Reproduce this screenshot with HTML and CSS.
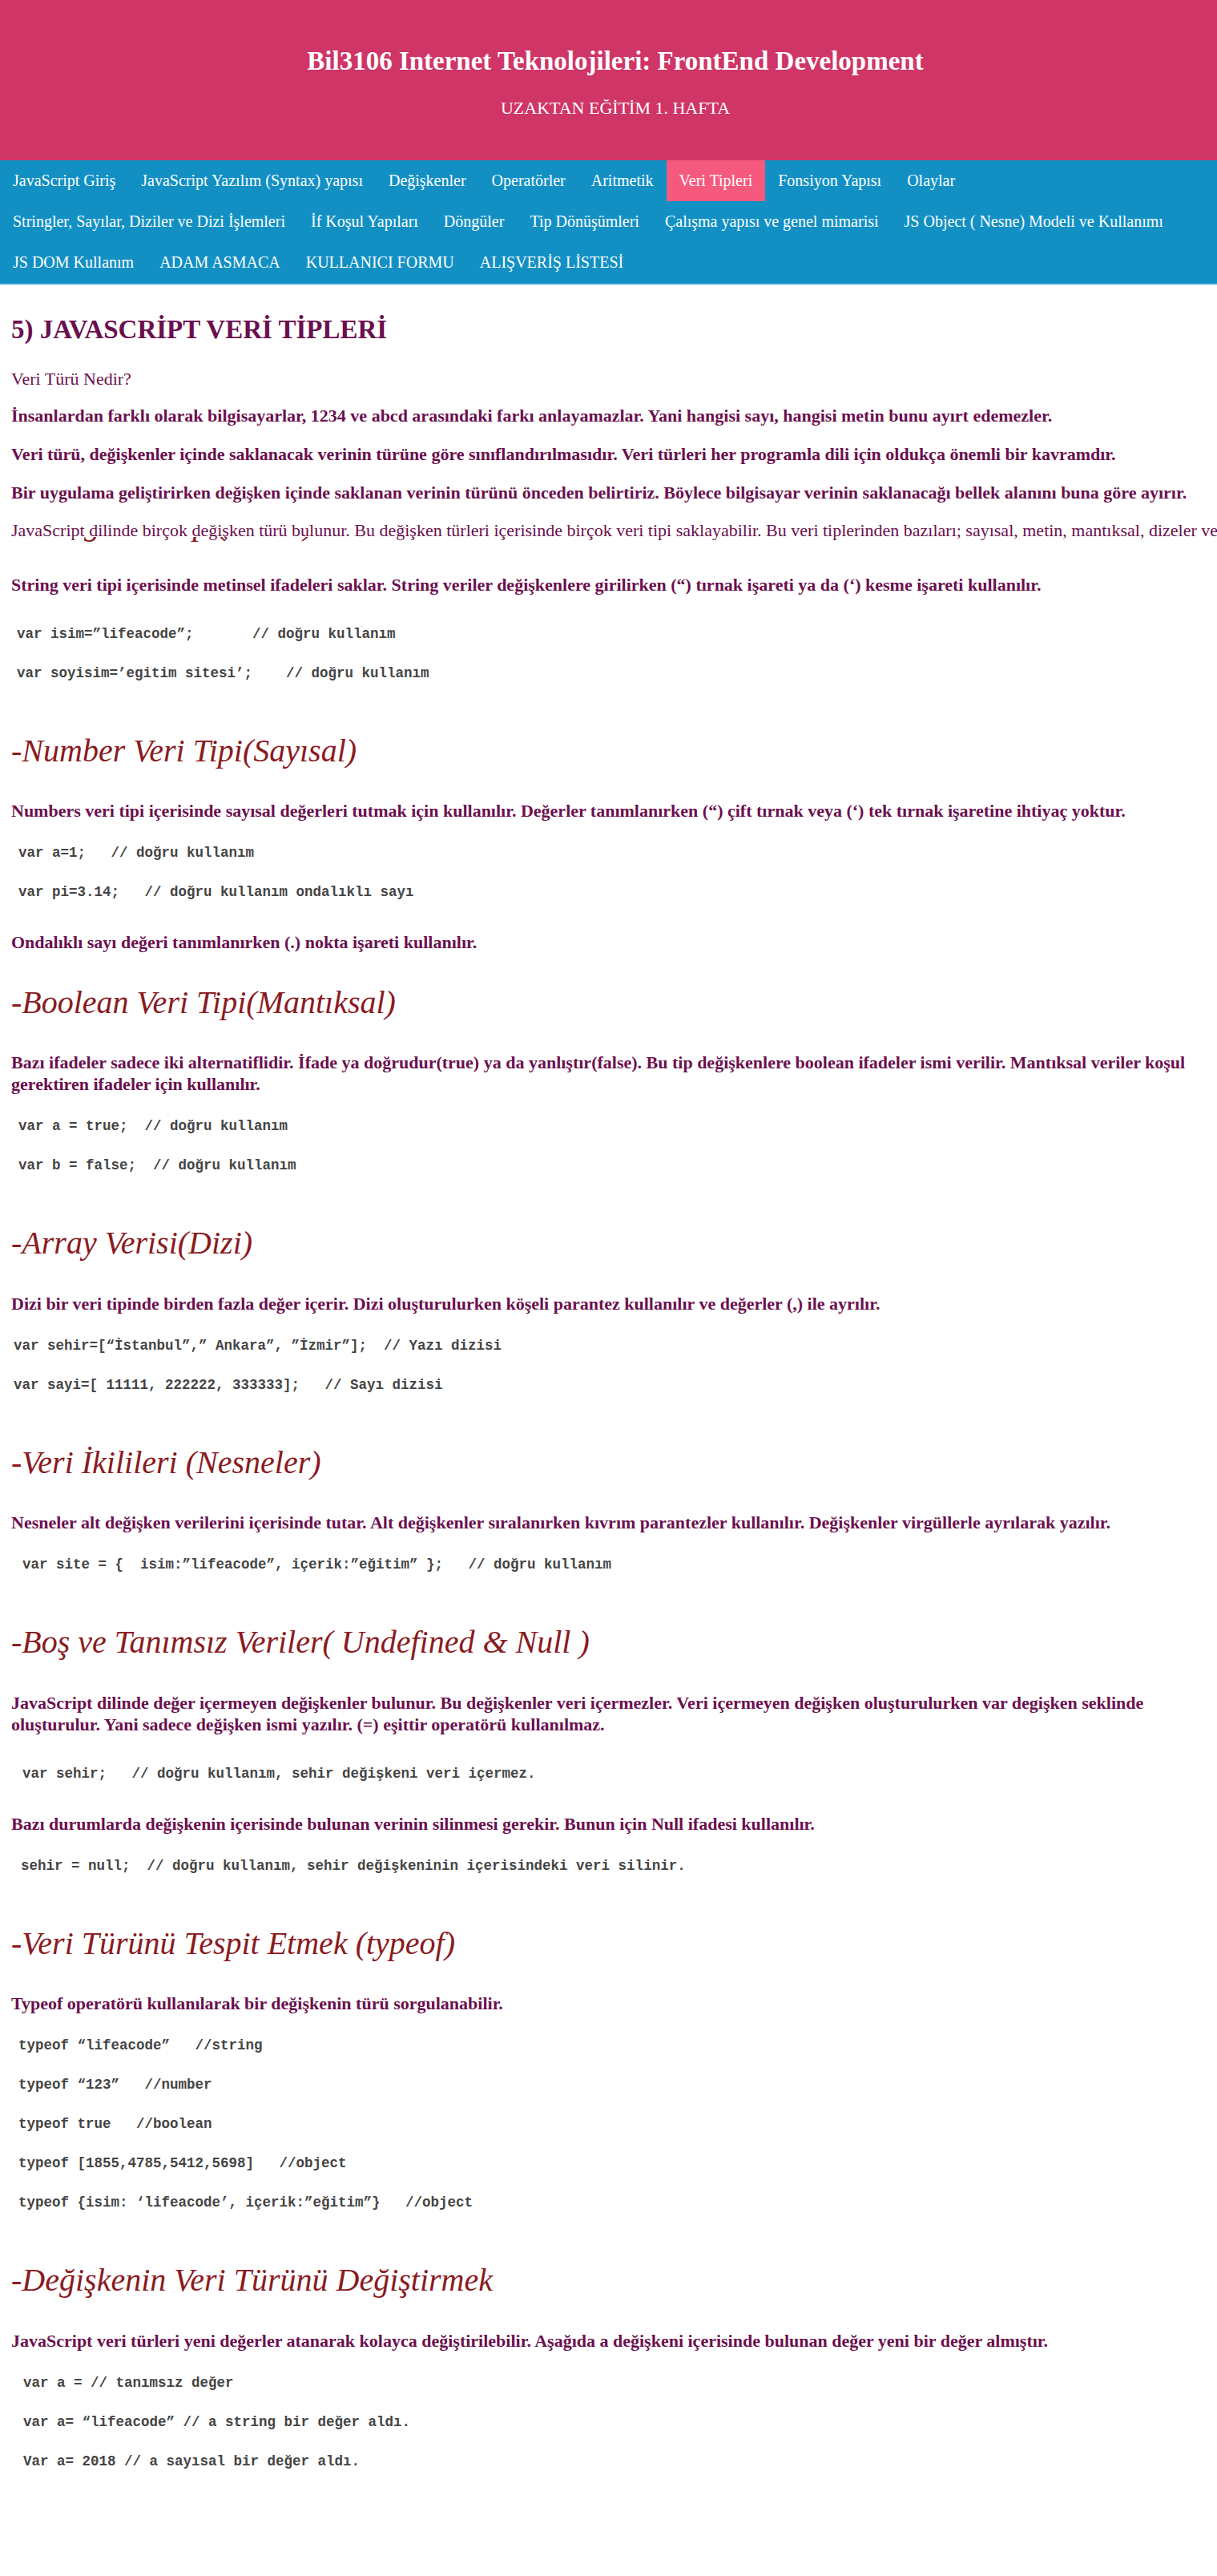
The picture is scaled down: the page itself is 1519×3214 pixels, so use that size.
FILE: index.html
```html
<!DOCTYPE html>
<html lang="tr">
<head>
<meta charset="utf-8">
<title>Veri Tipleri</title>
<link rel="stylesheet" href="styles.css">
</head>
<body>
<header class="masthead">
  <h1 class="site-title">Bil3106 Internet Teknolojileri: FrontEnd Development</h1>
  <p class="site-sub">UZAKTAN EĞİTİM 1. HAFTA</p>
</header>
<nav class="topnav">
  <a href="#">JavaScript Giriş</a>
  <a href="#">JavaScript Yazılım (Syntax) yapısı</a>
  <a href="#">Değişkenler</a>
  <a href="#">Operatörler</a>
  <a href="#">Aritmetik</a>
  <a href="#" class="active">Veri Tipleri</a>
  <a href="#">Fonsiyon Yapısı</a>
  <a href="#">Olaylar</a>
  <a href="#">Stringler, Sayılar, Diziler ve Dizi İşlemleri</a>
  <a href="#">İf Koşul Yapıları</a>
  <a href="#">Döngüler</a>
  <a href="#">Tip Dönüşümleri</a>
  <a href="#">Çalışma yapısı ve genel mimarisi</a>
  <a href="#">JS Object ( Nesne) Modeli ve Kullanımı</a>
  <a href="#">JS DOM Kullanım</a>
  <a href="#">ADAM ASMACA</a>
  <a href="#">KULLANICI FORMU</a>
  <a href="#">ALIŞVERİŞ LİSTESİ</a>
</nav>
<main class="content">
  <h2 class="title">5) JAVASCRİPT VERİ TİPLERİ</h2>
  <p class="lead">Veri Türü Nedir?</p>
  <p class="txt">İnsanlardan farklı olarak bilgisayarlar, 1234 ve abcd arasındaki farkı anlayamazlar. Yani hangisi sayı, hangisi metin bunu ayırt edemezler.</p>
  <p class="txt">Veri türü, değişkenler içinde saklanacak verinin türüne göre sınıflandırılmasıdır. Veri türleri her programla dili için oldukça önemli bir kavramdır.</p>
  <p class="txt">Bir uygulama geliştirirken değişken içinde saklanan verinin türünü önceden belirtiriz. Böylece bilgisayar verinin saklanacağı bellek alanını buna göre ayırır.</p>
  <p class="lead cover">JavaScript dilinde birçok değişken türü bulunur. Bu değişken türleri içerisinde birçok veri tipi saklayabilir. Bu veri tiplerinden bazıları; sayısal, metin, mantıksal, dizeler ve nesneler gibi veri tipleridir.</p>
  <h3 class="sub buried">-String Veri Tipi(Metin)</h3>
  <p class="txt">String veri tipi içerisinde metinsel ifadeleri saklar. String veriler değişkenlere girilirken (“) tırnak işareti ya da (‘) kesme işareti kullanılır.</p>
  <p class="code roomy at-a">var isim=”lifeacode”;       // doğru kullanım</p>
  <p class="code at-a">var soyisim=’egitim sitesi’;    // doğru kullanım</p>

  <h3 class="sub">-Number Veri Tipi(Sayısal)</h3>
  <p class="txt">Numbers veri tipi içerisinde sayısal değerleri tutmak için kullanılır. Değerler tanımlanırken (“) çift tırnak veya (‘) tek tırnak işaretine ihtiyaç yoktur.</p>
  <p class="code at-b">var a=1;   // doğru kullanım</p>
  <p class="code at-b">var pi=3.14;   // doğru kullanım ondalıklı sayı</p>
  <p class="txt">Ondalıklı sayı değeri tanımlanırken (.) nokta işareti kullanılır.</p>

  <h3 class="sub">-Boolean Veri Tipi(Mantıksal)</h3>
  <p class="txt">Bazı ifadeler sadece iki alternatiflidir. İfade ya doğrudur(true) ya da yanlıştır(false). Bu tip değişkenlere boolean ifadeler ismi verilir. Mantıksal veriler koşul gerektiren ifadeler için kullanılır.</p>
  <p class="code at-c">var a = true;  // doğru kullanım</p>
  <p class="code at-c">var b = false;  // doğru kullanım</p>

  <h3 class="sub">-Array Verisi(Dizi)</h3>
  <p class="txt">Dizi bir veri tipinde birden fazla değer içerir. Dizi oluşturulurken köşeli parantez kullanılır ve değerler (,) ile ayrılır.</p>
  <p class="code at-d">var sehir=[“İstanbul”,” Ankara”, ”İzmir”];  // Yazı dizisi</p>
  <p class="code at-d">var sayi=[ 11111, 222222, 333333];   // Sayı dizisi</p>

  <h3 class="sub">-Veri İkilileri (Nesneler)</h3>
  <p class="txt">Nesneler alt değişken verilerini içerisinde tutar. Alt değişkenler sıralanırken kıvrım parantezler kullanılır. Değişkenler virgüllerle ayrılarak yazılır.</p>
  <p class="code at-e">var site = {  isim:”lifeacode”, içerik:”eğitim” };   // doğru kullanım</p>

  <h3 class="sub">-Boş ve Tanımsız Veriler( Undefined &amp; Null )</h3>
  <p class="txt">JavaScript dilinde değer içermeyen değişkenler bulunur. Bu değişkenler veri içermezler. Veri içermeyen değişken oluşturulurken var degişken seklinde oluşturulur. Yani sadece değişken ismi yazılır. (=) eşittir operatörü kullanılmaz.</p>
  <p class="code roomy at-e">var sehir;   // doğru kullanım, sehir değişkeni veri içermez.</p>
  <p class="txt">Bazı durumlarda değişkenin içerisinde bulunan verinin silinmesi gerekir. Bunun için Null ifadesi kullanılır.</p>
  <p class="code at-f">sehir = null;  // doğru kullanım, sehir değişkeninin içerisindeki veri silinir.</p>

  <h3 class="sub">-Veri Türünü Tespit Etmek (typeof)</h3>
  <p class="txt">Typeof operatörü kullanılarak bir değişkenin türü sorgulanabilir.</p>
  <p class="code at-c">typeof “lifeacode”   //string</p>
  <p class="code at-c">typeof “123”   //number</p>
  <p class="code at-c">typeof true   //boolean</p>
  <p class="code at-c">typeof [1855,4785,5412,5698]   //object</p>
  <p class="code at-c">typeof {isim: ‘lifeacode’, içerik:”eğitim”}   //object</p>

  <h3 class="sub">-Değişkenin Veri Türünü Değiştirmek</h3>
  <p class="txt">JavaScript veri türleri yeni değerler atanarak kolayca değiştirilebilir. Aşağıda a değişkeni içerisinde bulunan değer yeni bir değer almıştır.</p>
  <p class="code at-g">var a = // tanımsız değer</p>
  <p class="code at-g">var a= “lifeacode” // a string bir değer aldı.</p>
  <p class="code at-g">Var a= 2018 // a sayısal bir değer aldı.</p>
</main>
</body>
</html>
```

FILE: styles.css
```css
html, body {
  overflow-x: hidden;
}

body {
  margin: 0;
  background: #ffffff;
  font-family: "Liberation Serif", "Times New Roman", serif;
}

/* ---------- header ---------- */
.masthead {
  background: #cf3566;
  color: #ffffff;
  text-align: center;
  padding: 58px 0 52px 17px;
}

.site-title {
  margin: 0;
  font-size: 33px;
  line-height: 37px;
  font-weight: bold;
}

.site-sub {
  margin: 27px 0 0;
  font-size: 22px;
  line-height: 26px;
}

/* ---------- navigation ---------- */
.topnav {
  display: flex;
  flex-wrap: wrap;
  background: #1290c4;
  border-bottom: 2px solid #3aa2d2;
}

.topnav a {
  color: #ffffff;
  text-decoration: none;
  font-size: 20px;
  line-height: 23px;
  padding: 14px 16px;
}

.topnav a.active {
  background: #f55a7e;
}

/* ---------- content ---------- */
.content {
  padding: 38px 14px 120px;
  color: #6b0f4e;
}

.content > * {
  margin: 0;
}

.title {
  font-size: 33px;
  line-height: 37px;
  font-weight: bold;
}

.lead,
.txt {
  font-size: 22px;
  line-height: 27px;
}

.lead {
  font-weight: normal;
}

.txt {
  font-weight: bold;
}

.sub {
  font-size: 40px;
  line-height: 46px;
  font-style: italic;
  font-weight: normal;
  color: #8a1b1f;
}

.code {
  font-family: "Liberation Mono", "Courier New", monospace;
  font-weight: bold;
  font-size: 17.5px;
  line-height: 23px;
  color: #444444;
  white-space: pre;
}

/* paragraph that overflows the page and hides the heading under it */
.cover {
  position: relative;
  z-index: 1;
  background: #ffffff;
  white-space: nowrap;
  line-height: 17px;
  padding-top: 20px;
}

/* code indents */
.at-a { margin-left: 7px; }
.at-b { margin-left: 9px; }
.at-c { margin-left: 9px; }
.at-d { margin-left: 3px; }
.at-e { margin-left: 14px; }
.at-f { margin-left: 12px; }
.at-g { margin-left: 15px; }

/* ---------- vertical rhythm ---------- */
.title + .lead { margin-top: 29px; }
.lead + .txt { margin-top: 19px; }
.txt + .txt { margin-top: 21px; }
.txt + .lead { margin-top: 21px; }
.txt + .lead.cover { margin-top: 5px; }
.cover + .sub.buried { margin-top: -39px; }
.buried + .txt { margin-top: 42px; }

.txt + .code { margin-top: 28px; }
.txt + .code.roomy { margin-top: 37px; }
.code + .code { margin-top: 26px; }
.code + .txt { margin-top: 37px; }
.code + .sub { margin-top: 62px; }
.txt + .sub { margin-top: 38.5px; }
.sub + .txt { margin-top: 38.5px; }
```
